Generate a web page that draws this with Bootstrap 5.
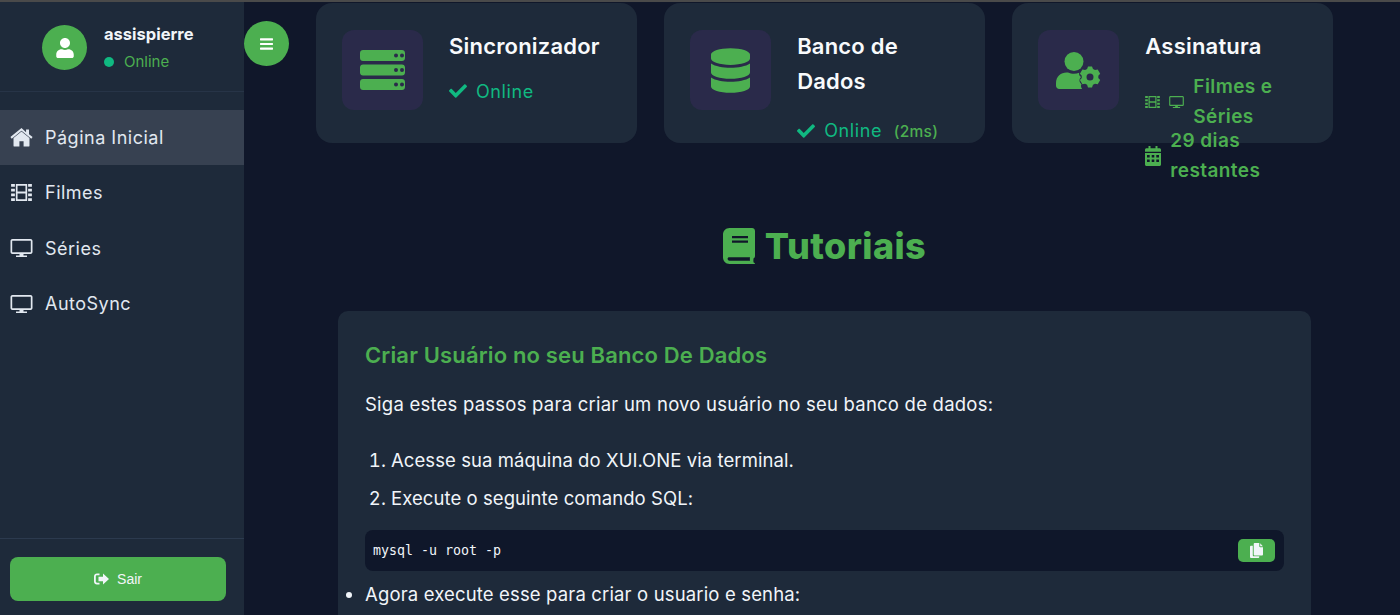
<!DOCTYPE html>
<html lang="pt-BR">
<head>
<meta charset="utf-8">
<title>Painel</title>
<link href="https://cdn.jsdelivr.net/npm/bootstrap@5.3.0/dist/css/bootstrap.min.css" rel="stylesheet">
<style>
html,body{height:615px;overflow:hidden;}
body{background:#10172a;color:#f1f5f9;font-family:Inter,"Noto Sans",sans-serif;}
.topstrip{height:2px;background:#4a4a4a;}
.shell{height:613px;}
.ico{fill:currentColor;flex:none;display:block;}
.side{width:244px;flex:none;background:#1e2a3a;color:#e2e8f0;}
.side-head{height:90px;border-bottom:1px solid #273447;padding:23px 0 0 42px;gap:17px;}
.avatar{width:45px;height:45px;border-radius:50%;background:#4caf50;color:#fff;}
.uname{font-size:16.5px;font-weight:700;color:#f1f5f9;line-height:20px;margin-top:-1px;}
.ustat{font-size:15px;color:#4caf50;line-height:20px;margin-top:8px;}
.dot{width:10px;height:10px;border-radius:50%;background:#10b981;margin-right:10px;}
.menu{margin-top:18px;}
.menu-item{height:55.3px;padding-left:10px;gap:12px;font-size:18px;color:#e2e8f0;text-decoration:none;letter-spacing:.5px;}
.menu-item.on{background:#374151;}
.side-foot{margin-top:auto;border-top:1px solid #2c3a4e;padding:18px 18px 14px 10px;}
.btn-sair{display:flex;align-items:center;justify-content:center;gap:8px;height:44px;width:100%;background:#4caf50;border:0;border-radius:8px;color:#f1f5f9;font-family:"Liberation Sans",sans-serif;font-size:14px;}
.toggle{position:absolute;left:244px;top:19px;width:45px;height:45px;border-radius:50%;background:#4caf50;color:#fff;border:0;padding:0;}
.content{flex:1;min-width:0;padding:1px 67px 0 72px;}
.cards{display:grid;grid-template-columns:repeat(3,1fr);gap:27.5px;}
.stat{height:140px;background:#1e2a3a;border-radius:16px;padding:26px 26px 27px;gap:26px;}
.stat-ic{width:81px;height:80px;flex:none;border-radius:12px;background:#2a2a4a;color:#4caf50;margin-top:1px;}
.stat-body{min-width:0;flex:1;}
.stat-title{font-size:22px;line-height:34.5px;font-weight:600;color:#f8fafc;letter-spacing:.2px;}
.ok{color:#10b981;font-size:18px;line-height:27px;gap:9px;margin-top:14px;letter-spacing:.6px;}
.ok-low{margin-top:19px;}
.ok small{font-size:15.5px;color:#4caf50;margin-left:6px;font-weight:500;letter-spacing:.3px;}
.sub{color:#4caf50;font-size:19px;font-weight:600;line-height:30px;letter-spacing:.4px;}
.sub-a{margin-top:8px;gap:9px;}
.sub-b{gap:9px;margin-top:-6px;}
.tut-title{color:#4caf50;font-size:36px;font-weight:800;line-height:48px;gap:10px;margin-top:79px;letter-spacing:.4px;}
.panel{background:#1e2a3a;border-radius:10px;margin:41px 22px 0;padding:27px 27px 0 27px;height:400px;}
.panel h3{color:#4caf50;font-size:22px;font-weight:600;line-height:34px;margin:0 0 17px;letter-spacing:.15px;}
.panel p{font-size:18.5px;line-height:30px;margin:0 0 26px;color:#f1f5f9;letter-spacing:.23px;}
.panel ol{font-size:18.5px;line-height:30px;margin:0 0 17px;padding-left:26px;letter-spacing:.07px;}
.panel ol li{margin-bottom:8px;}
.panel ul{font-size:18.5px;line-height:30px;margin:8px 0 0;padding-left:0;letter-spacing:.15px;}
.codebox{background:#0f172a;border-radius:8px;height:41px;padding:0 9px 0 8px;color:#f1f5f9;}
.codebox code{font-family:"DejaVu Sans Mono","Liberation Mono",monospace;font-size:13.3px;color:#f1f5f9;font-weight:500;}
.copybtn{width:37px;height:23px;background:#4caf50;border:0;border-radius:5px;color:#f1f5f9;padding:0;}
</style>
</head>
<body>
<svg width="0" height="0" class="position-absolute">
<defs>
<symbol id="i-user" viewBox="0 0 448 512"><path d="M224 256c70.700 0 128-57.300 128-128S294.700 0 224 0 96 57.300 96 128s57.300 128 128 128zm89.600 32h-16.700c-22.200 10.200-46.900 16-72.900 16s-50.600-5.800-72.900-16h-16.700C60.200 288 0 348.200 0 422.400V464c0 26.500 21.500 48 48 48h352c26.500 0 48-21.500 48-48v-41.600c0-74.200-60.200-134.400-134.400-134.400z"/></symbol>
<symbol id="i-bars" viewBox="0 0 448 512"><path d="M16 132h416c8.837 0 16-7.163 16-16V76c0-8.837-7.163-16-16-16H16C7.163 60 0 67.163 0 76v40c0 8.837 7.163 16 16 16zm0 160h416c8.837 0 16-7.163 16-16v-40c0-8.837-7.163-16-16-16H16c-8.837 0-16 7.163-16 16v40c0 8.837 7.163 16 16 16zm0 160h416c8.837 0 16-7.163 16-16v-40c0-8.837-7.163-16-16-16H16c-8.837 0-16 7.163-16 16v40c0 8.837 7.163 16 16 16z"/></symbol>
<symbol id="i-home" viewBox="0 0 24 20"><path d="M12 3.600 3.600 10.500V18.600c0 .6.400 1 1 1h5.200v-5.600h4.400v5.600h5.200c.6 0 1-.4 1-1v-8.100z"/><path d="M12 0 .3 9.600l1.400 1.700L12 2.900l10.300 8.400 1.400-1.700-3.800-3.100V1.500h-3.100v3.100z"/></symbol>
<symbol id="i-film" viewBox="0 0 22 18"><path fill-rule="evenodd" d="M0 0h4v3H0zM0 5h4v3H0zM0 10h4v3H0zM0 15h4v3H0zM18 0h4v3h-4zM18 5h4v3h-4zM18 10h4v3h-4zM18 15h4v3h-4zM5 0h12v18H5zM6.800 1.800V8h8.400V1.800zM6.800 10v6.200h8.400V10z"/></symbol>
<symbol id="i-tv" viewBox="0 0 22 18"><path fill-rule="evenodd" d="M2 0h18c1.100 0 2 .9 2 2v11c0 1.100-.9 2-2 2h-7v1.500h3.500V18h-11v-1.500H9V15H2c-1.100 0-2-.9-2-2V2C0 .9.900 0 2 0zm0 1.700c-.2 0-.3.100-.3.300v11c0 .2.100.3.300.3h18c.2 0 .3-.1.300-.3V2c0-.2-.1-.3-.3-.3z"/></symbol>
<symbol id="i-check" viewBox="0 0 512 512"><path d="M173.898 439.404l-166.400-166.400c-9.997-9.997-9.997-26.206 0-36.204l36.203-36.204c9.997-9.998 26.207-9.998 36.204 0L192 312.690 432.095 72.596c9.997-9.997 26.207-9.997 36.204 0l36.203 36.204c9.997 9.997 9.997 26.206 0 36.204l-294.400 294.401c-9.998 9.997-26.207 9.997-36.204-.001z"/></symbol>
<symbol id="i-server" viewBox="0 0 45 40"><path fill-rule="evenodd" d="M3 0h39c1.700 0 3 1.300 3 3v5c0 1.700-1.300 3-3 3H3c-1.700 0-3-1.300-3-3V3c0-1.700 1.300-3 3-3zm31 5.500a2 2 0 1 0 4 0 2 2 0 1 0-4 0zm6 0a2 2 0 1 0 4 0 2 2 0 1 0-4 0zM3 14.500h39c1.700 0 3 1.300 3 3v5c0 1.700-1.300 3-3 3H3c-1.700 0-3-1.300-3-3v-5c0-1.700 1.300-3 3-3zM34 20a2 2 0 1 0 4 0 2 2 0 1 0-4 0zm6 0a2 2 0 1 0 4 0 2 2 0 1 0-4 0zM3 29h39c1.700 0 3 1.300 3 3v5c0 1.700-1.300 3-3 3H3c-1.700 0-3-1.300-3-3v-5c0-1.700 1.300-3 3-3zm31 5.500a2 2 0 1 0 4 0 2 2 0 1 0-4 0zm6 0a2 2 0 1 0 4 0 2 2 0 1 0-4 0z"/></symbol>
<symbol id="i-db" viewBox="0 0 448 512"><path d="M448 73.143v45.714C448 159.143 347.667 192 224 192S0 159.143 0 118.857V73.143C0 32.857 100.333 0 224 0s224 32.857 224 73.143zM448 176v102.857C448 319.143 347.667 352 224 352S0 319.143 0 278.857V176c48.125 33.143 136.208 48.572 224 48.572S399.874 209.143 448 176zm0 160v102.857C448 479.143 347.667 512 224 512S0 479.143 0 438.857V336c48.125 33.143 136.208 48.572 224 48.572S399.874 369.143 448 336z"/></symbol>
<symbol id="i-usercog" viewBox="0 0 46 37"><circle cx="18" cy="9.500" r="9.500"/><path d="M0 31c0-6.500 5-10.500 10.500-10.500h1.500c1.800.8 3.900 1.300 6 1.300 1.800 0 3.600-.3 5.200-1-.6 1.900.4 3.300 1.900 4.300-1.900 1.500-2.400 4.800.1 6.800l.3.300c-.9.900-.5 3.200.6 4.800H3.300C1.500 37 0 35.500 0 33.700z"/><path fill-rule="evenodd" d="M36 14.500l1 2.600c.7.200 1.400.6 2 1l2.700-.6 2.500 4.300-1.900 2c.1.800.1 1.500 0 2.200l1.900 2-2.500 4.300-2.700-.6c-.6.400-1.300.8-2 1l-1 2.800h-4l-.9-2.800c-.7-.2-1.400-.6-2-1l-2.700.6-2.500-4.300 1.900-2c-.1-.7-.1-1.400 0-2.200l-1.900-2 2.500-4.300 2.700.6c.6-.4 1.300-.8 2-1l.9-2.600zM34 21.400a3.500 3.500 0 1 0 0 7 3.500 3.500 0 1 0 0-7z"/></symbol>
<symbol id="i-cal" viewBox="0 0 16 20"><path fill-rule="evenodd" d="M3.500 0H5.500V2.200H10.500V0H12.500V2.200H14.500C15.300 2.200 16 2.900 16 3.700V5.800H0V3.700C0 2.900.700 2.200 1.500 2.200H3.500zM0 7H16V18.500C16 19.300 15.300 20 14.500 20H1.500C.700 20 0 19.300 0 18.500zM2 9v2.500H4.700V9zM6.700 9v2.500H9.300V9zM11.300 9v2.500H14V9zM2 13.500V16H4.700V13.500zM6.700 13.500V16H9.300V13.500zM11.300 13.500V16H14V13.500z"/></symbol>
<symbol id="i-book" viewBox="0 0 32 36"><path fill-rule="evenodd" d="M6.500 0H29c1.700 0 3 1.300 3 3v25c0 1.100-.6 1.900-1.400 2.300-.3 1.600-.3 2.900 0 4.200.8.300 1.400.8 1.400 1.500H6.500C2.900 36 0 33.100 0 29.500v-23C0 2.900 2.900 0 6.500 0zM9 8v2.200h16V8zM9 12.600v2.200h16v-2.200zM6.500 29.300C5 29.300 4.600 30 4.600 30.800s.6 2 1.900 2H27c-.2-1.300-.2-2.300 0-3.500z"/></symbol>
<symbol id="i-copy" viewBox="0 0 14 16"><path d="M5 0h5v3.500c0 .5.400 1 1 1h3v7.800c0 .6-.4 1-1 1H5c-.6 0-1-.4-1-1V1C4 .4 4.400 0 5 0zM11 .2 13.800 3.300H11zM1 3h2v10c0 .8.600 1.300 1.300 1.300H10V15c0 .6-.4 1-1 1H1c-.6 0-1-.4-1-1V4c0-.6.400-1 1-1z"/></symbol>
<symbol id="i-out" viewBox="0 0 15 12"><path d="M9 .5 15 6 9 11.500V8.300H4.500V3.700H9zM3 .5h2.500v1.800H3c-.7 0-1.200.5-1.200 1.200v5c0 .7.500 1.200 1.200 1.200h2.500v1.800H3C1.300 11.500 0 10.200 0 8.500v-5C0 1.800 1.300.5 3 .5z"/></symbol>
</defs>
</svg>
<div class="topstrip"></div>
<div class="shell d-flex position-relative">
  <aside class="side d-flex flex-column">
    <div class="side-head d-flex">
      <div class="avatar d-flex align-items-center justify-content-center"><svg class="ico" width="18" height="20"><use href="#i-user"/></svg></div>
      <div>
        <div class="uname">assispierre</div>
        <div class="ustat d-flex align-items-center"><span class="dot"></span>Online</div>
      </div>
    </div>
    <nav class="menu d-flex flex-column">
      <a class="menu-item on d-flex align-items-center" href="#"><svg class="ico" width="23" height="19"><use href="#i-home"/></svg>Página Inicial</a>
      <a class="menu-item d-flex align-items-center" href="#"><svg class="ico" width="23" height="17"><use href="#i-film"/></svg>Filmes</a>
      <a class="menu-item d-flex align-items-center" href="#"><svg class="ico" width="23" height="18"><use href="#i-tv"/></svg>Séries</a>
      <a class="menu-item d-flex align-items-center" href="#"><svg class="ico" width="23" height="18"><use href="#i-tv"/></svg>AutoSync</a>
    </nav>
    <div class="side-foot"><button class="btn-sair"><svg class="ico" width="15" height="12"><use href="#i-out"/></svg>Sair</button></div>
  </aside>
  <button class="toggle d-flex align-items-center justify-content-center"><svg class="ico" width="13" height="16"><use href="#i-bars"/></svg></button>
  <main class="content">
    <section class="cards">
      <div class="stat d-flex">
        <div class="stat-ic d-flex align-items-center justify-content-center"><svg class="ico" width="45" height="40"><use href="#i-server"/></svg></div>
        <div class="stat-body">
          <div class="stat-title">Sincronizador</div>
          <div class="ok d-flex align-items-center"><svg class="ico" width="18" height="18"><use href="#i-check"/></svg>Online</div>
        </div>
      </div>
      <div class="stat d-flex">
        <div class="stat-ic d-flex align-items-center justify-content-center"><svg class="ico" width="39" height="45"><use href="#i-db"/></svg></div>
        <div class="stat-body">
          <div class="stat-title">Banco de Dados</div>
          <div class="ok ok-low d-flex align-items-center"><svg class="ico" width="18" height="18"><use href="#i-check"/></svg><span>Online <small>(2ms)</small></span></div>
        </div>
      </div>
      <div class="stat d-flex">
        <div class="stat-ic d-flex align-items-center justify-content-center"><svg class="ico" width="46" height="37"><use href="#i-usercog"/></svg></div>
        <div class="stat-body">
          <div class="stat-title">Assinatura</div>
          <div class="sub sub-a d-flex align-items-center"><svg class="ico" width="15" height="12"><use href="#i-film"/></svg><svg class="ico" width="15" height="12"><use href="#i-tv"/></svg><span>Filmes e Séries</span></div>
          <div class="sub sub-b d-flex align-items-center"><svg class="ico" width="16" height="20"><use href="#i-cal"/></svg><span>29 dias restantes</span></div>
        </div>
      </div>
    </section>
    <h2 class="tut-title d-flex align-items-center justify-content-center mb-0"><svg class="ico" width="32" height="36"><use href="#i-book"/></svg>Tutoriais</h2>
    <section class="panel">
      <h3>Criar Usuário no seu Banco De Dados</h3>
      <p>Siga estes passos para criar um novo usuário no seu banco de dados:</p>
      <ol>
        <li>Acesse sua máquina do XUI.ONE via terminal.</li>
        <li>Execute o seguinte comando SQL:</li>
      </ol>
      <div class="codebox d-flex align-items-center justify-content-between">
        <code>mysql -u root -p</code>
        <button class="copybtn d-flex align-items-center justify-content-center"><svg class="ico" width="13" height="15"><use href="#i-copy"/></svg></button>
      </div>
      <ul><li>Agora execute esse para criar o usuario e senha:</li></ul>
    </section>
  </main>
</div>
</body>
</html>
